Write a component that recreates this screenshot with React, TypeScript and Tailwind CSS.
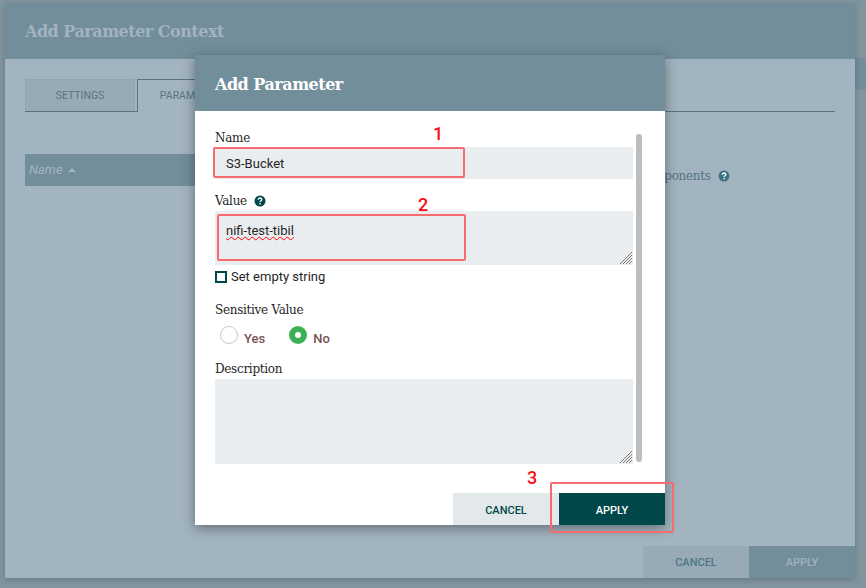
const slab = "font-['DejaVu_Serif',serif]";
const roboto = "font-['Roboto',sans-serif]";

const HelpIcon = ({ className }: { className: string }) => (
  <svg viewBox="0 0 12 12" className={className}>
    <circle cx="6" cy="6" r="5.5" fill="currentColor" />
    <path d="M4.2 4.7c0-1.1.8-1.7 1.8-1.7s1.8.6 1.8 1.5c0 1.3-1.7 1.3-1.7 2.6" fill="none" stroke="#fff" strokeWidth="1.3" />
    <rect x="5.4" y="8" width="1.4" height="1.4" fill="#fff" />
  </svg>
);

const Grip = () => (
  <svg viewBox="0 0 12 12" className="absolute right-[1px] bottom-[1px] w-[12px] h-[12px]">
    <path d="M12 0L0 12M12 3L3 12M12 6L6 12M12 9L9 12" stroke="#7d7d7d" strokeWidth="1" />
  </svg>
);

const Annotation = ({ className }: { className: string }) => (
  <div className={`absolute border-2 border-[#f56c70] rounded-[2px] pointer-events-none ${className}`} />
);

const Num = ({ className, children }: { className: string; children: string }) => (
  <span className={`absolute text-[#f80d14] text-[18px] leading-[20px] font-['Roboto',sans-serif] font-medium ${className}`}>
    {children}
  </span>
);

const Label = ({ children }: { children: React.ReactNode }) => (
  <div className={`${slab} text-[12px] leading-[16px] tracking-[-0.3px] text-[#262626]`}>{children}</div>
);

const AddParameterDialog = () => (
  <div className="absolute left-[195px] top-[55px] w-[470px] h-[470px] bg-white flex flex-col shadow-[0_3px_12px_rgba(0,0,0,0.4)]">
    <div className={`${slab} h-[56px] shrink-0 bg-[#728e9b] px-5 pt-[18px] text-[16px] leading-[24px] tracking-[-0.5px] font-bold text-white`}>
      Add Parameter
    </div>
    <div className="flex flex-1 min-h-0">
      <div className="w-[418px] ml-5 pt-[19px]">
        <Label>Name</Label>
        <div className={`${roboto} mt-[1px] h-[32px] bg-[#eaedf0] px-[11px] text-[13px] leading-[33px] text-[#262626]`}>
          S3-Bucket
        </div>
        <div className="mt-[14px] flex items-center gap-[7px]">
          <Label>Value</Label>
          <HelpIcon className="w-[12px] h-[12px] text-[#004849]" />
        </div>
        <div className={`${roboto} relative mt-[2px] h-[54px] bg-[#eaedf0] px-[11px] pt-[11px] text-[13px] leading-[18px] text-[#262626]`}>
          <span className="underline decoration-wavy decoration-[#f00] decoration-1">nifi-test-tibil</span>
          <Grip />
        </div>
        <div className="mt-[4px] flex items-center gap-[4px]">
          <div className="w-[12px] h-[12px] border-2 border-[#004849]" />
          <span className={`${roboto} text-[13px] leading-[16px] text-[#262626]`}>Set empty string</span>
        </div>
        <div className="mt-[17px]">
          <Label>Sensitive Value</Label>
        </div>
        <div className={`${roboto} mt-[8px] flex h-[20px] pl-[5px] text-[13px] font-medium text-[#775351]`}>
          <div className="flex items-start gap-[6px]">
            <div className="w-[18px] h-[18px] rounded-full border border-[#c4c8d0] bg-white" />
            <span className="mt-[5px] leading-[16px]">Yes</span>
          </div>
          <div className="flex items-start gap-[6px] ml-[24px]">
            <div className="w-[18px] h-[18px] rounded-full bg-[#3cb054] flex items-center justify-center">
              <div className="w-[6px] h-[6px] rounded-full bg-white" />
            </div>
            <span className="mt-[5px] leading-[16px]">No</span>
          </div>
        </div>
        <div className="mt-[15px]">
          <Label>Description</Label>
        </div>
        <div className="relative mt-[2px] h-[85px] bg-[#eaedf0]">
          <Grip />
        </div>
      </div>
      <div className="ml-[3px] mt-[23px] w-[6px] h-[328px] rounded-[3px] bg-[#bdbdbd]" />
    </div>
    <div className={`${roboto} flex justify-end h-[32px] shrink-0 text-[11px] font-medium leading-[35px] text-center`}>
      <div className="w-[106px] bg-[#e3e8eb] text-[#004849]">CANCEL</div>
      <div className="w-[106px] bg-[#004849] text-white">APPLY</div>
    </div>
  </div>
);

export default function App() {
  return (
    <div className="relative w-[866px] h-[588px] overflow-hidden bg-[#81959f]">
      <div className="absolute left-[855px] top-[58px] w-[11px] h-[32px] bg-[#728e9b]" />
      <div className="relative ml-[5px] w-[850px] pt-[3px]">
        <div className="h-[575px] flex flex-col bg-[#a2b4bf] shadow-[0_2px_6px_rgba(0,0,0,0.18)]">
          <div className={`${slab} h-[56px] shrink-0 bg-[#728e9b] px-5 pt-[17px] text-[16px] leading-[24px] tracking-[-0.5px] font-bold text-[#a2b4bf]`}>
            Add Parameter Context
          </div>
          <div className="flex-1 min-h-0 px-5 pt-[20px] flex flex-col">
            <div className={`${roboto} flex h-[33px] border-b border-[#567483] text-[10.5px] leading-[32px] text-[#567483] text-center`}>
              <div className="w-[110px] border border-b-0 border-[#8fa5b0] bg-[#98abb5]">SETTINGS</div>
              <div className="ml-[2px] w-[112px] h-[33px] border border-b-0 border-[#567483] bg-[#a2b4bf] text-[#567483]">PARAMETERS</div>
            </div>
            <div className="flex mt-[42px] h-[32px]">
              <div className={`${roboto} w-[300px] bg-[#728e9b] pl-[4px] text-[13px] italic leading-[32px] text-[#a2b4bf] flex items-center gap-[5px]`}>
                Name
                <span className="w-0 h-0 border-x-[4px] border-x-transparent border-b-[4px] border-b-[#a2b4bf]" />
              </div>
              <div className="ml-[238px] flex items-center gap-[7px] pt-[11px]">
                <span className={`${slab} text-[12px] tracking-[-0.3px] text-[#567483] whitespace-nowrap`}>Referencing Components</span>
                <HelpIcon className="w-[12px] h-[12px] text-[#3d7184]" />
              </div>
            </div>
            <div className={`${roboto} mt-auto -mx-5 flex justify-end h-[32px] text-[11px] font-medium leading-[34px] text-center`}>
              <div className="w-[106px] bg-[#98abb5] text-[#4e7688]">CANCEL</div>
              <div className="w-[106px] bg-[#728e9b] text-[#a2b4bf]">APPLY</div>
            </div>
          </div>
        </div>
      </div>

      <AddParameterDialog />

      <Annotation className="left-[213px] top-[147px] w-[252px] h-[31px]" />
      <Annotation className="left-[217px] top-[214px] w-[249px] h-[47px]" />
      <Annotation className="left-[550px] top-[482px] w-[124px] h-[51px]" />
      <Num className="left-[433px] top-[124px]">1</Num>
      <Num className="left-[418px] top-[195px]">2</Num>
      <Num className="left-[527px] top-[468px]">3</Num>
    </div>
  );
}
